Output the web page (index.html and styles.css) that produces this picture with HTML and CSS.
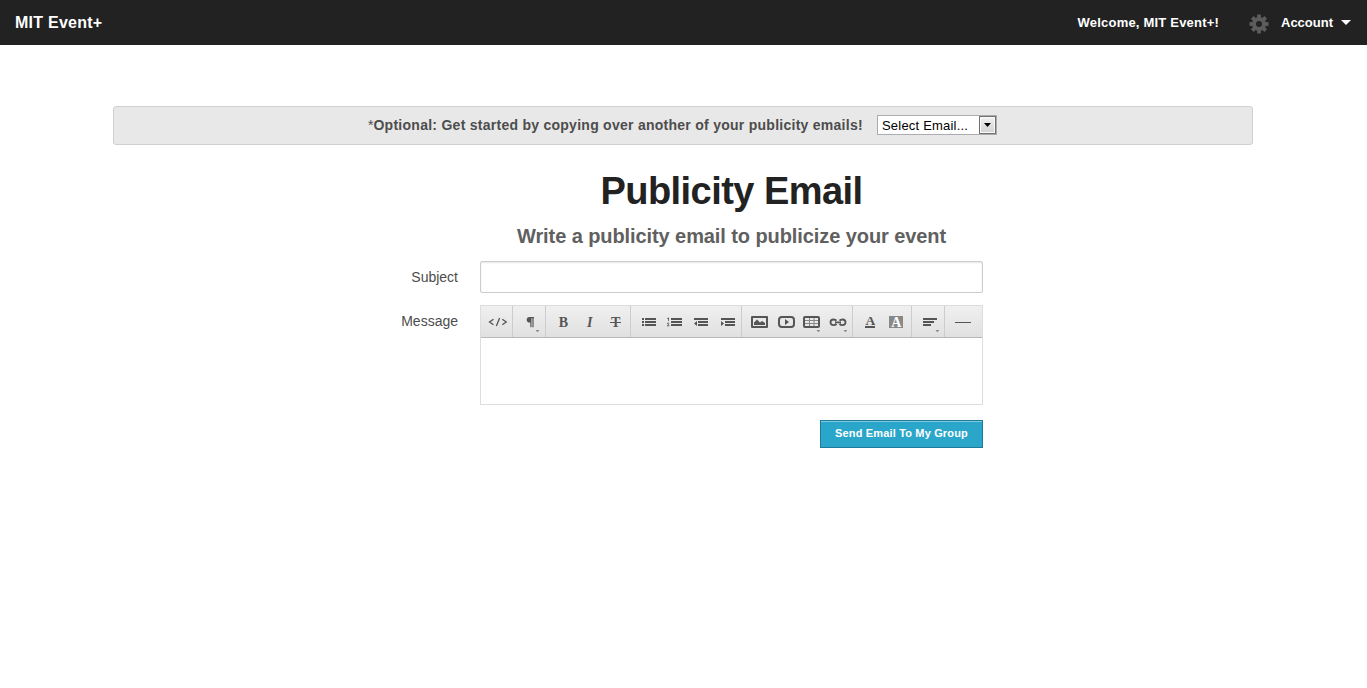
FILE: index.html
```html
<!DOCTYPE html>
<html lang="en">
<head>
<meta charset="utf-8">
<title>MIT Event+</title>
<link rel="stylesheet" href="styles.css">
</head>
<body>
<header class="topbar">
  <span class="brand">MIT Event+</span>
  <nav class="nav">
    <span class="welcome">Welcome, MIT Event+!</span>
    <svg class="gear" viewBox="-10 -10 20 20"><g fill="#5c5c5c"><rect x="-1.9" y="-9.5" width="3.8" height="19"/><rect x="-1.9" y="-9.5" width="3.8" height="19" transform="rotate(45)"/><rect x="-1.9" y="-9.5" width="3.8" height="19" transform="rotate(90)"/><rect x="-1.9" y="-9.5" width="3.8" height="19" transform="rotate(135)"/><circle r="7"/></g><circle r="3" fill="#222"/></svg>
    <span class="account">Account</span>
    <span class="caret"></span>
  </nav>
</header>
<main class="page">
  <section class="panel">
    <span class="hint"><span class="star">*</span>Optional: Get started by copying over another of your publicity emails!</span>
    <div class="select"><span class="select-text">Select Email...</span><span class="select-button"><svg width="7" height="4" viewBox="0 0 7 4"><path d="M0 0h7L3.5 4z"/></svg></span></div>
  </section>
  <form class="form">
    <h1 class="title"><span>Publicity Email</span></h1>
    <h2 class="subtitle"><span>Write a publicity email to publicize your event</span></h2>
    <div class="row subject-row">
      <label class="label" for="subject"><span>Subject</span></label>
      <input class="subject" id="subject" type="text">
    </div>
    <div class="row">
      <div class="label message"><span>Message</span></div>
      <div class="editor">
        <div class="toolbar">
          <svg class="group w32" viewBox="481 306 31 31"><g class="line"><path d="M493.5 319.2l-4 2.8 4 2.8M502.3 319.2l4 2.8-4 2.8M499.6 318l-3.2 8"/></g></svg>
          <svg class="group w33" viewBox="513 306 32 31"><path d="M534 317h-4.5a2.7 2.7 0 0 0 0 5.6h.8v4.7h1.2v-9.1h.9v9.1h1.2v-9.1h.4z"/><path class="drop" d="M535.6 330h3.8l-1.9 2.2z"/></svg>
          <svg class="group w85" viewBox="546 306 84 31"><text x="558.8" y="327" class="glyph">B</text><text x="586.9" y="327" class="glyph italic">I</text><text x="611" y="327" class="glyph">T</text><path class="gap" d="M610 321h11v3h-11z"/><path d="M610 322h11v1h-11zM614.7 321h2v3h-2z"/></svg>
          <svg class="group w111" viewBox="631 306 110 31"><path d="M642 318h2v2h-2zm3 0h11v2h-11zM642 321h2v2h-2zm3 0h11v2h-11zM642 324h2v2h-2zm3 0h11v2h-11zM671 318h11v2h-11zm0 3h11v2h-11zm0 3h11v2h-11zM694 318h14v2h-14zm4 3h10v2h-10zm0 3h10v2h-10zM697 321v5l-3-2.5zM721 318h14v2h-14zm4 3h10v2h-10zm0 3h10v2h-10zM721 321v5l3-2.5z"/><path class="thin" d="M667.2 318.5l1.3-.6v3M667 323.5q1.8-1 2 0l-1.7 2.3h2.2"/></svg>
          <svg class="group w111" viewBox="742 306 110 31"><path fill-rule="evenodd" d="M752 316h15q1 0 1 1v10q0 1-1 1h-15q-1 0-1-1v-10q0-1 1-1zm1 2v8h13v-8z"/><path d="M754 325v-2.5l3-3 3 3 2-1.5 3 2v2z"/><rect class="frame" x="779" y="317" width="15" height="10" rx="3"/><path d="M785 319v6l4-3z"/><rect class="frame" x="804" y="317" width="15" height="10" rx="1"/><path class="grid" d="M805 320.5h13M805 323.5h13M809.5 318v8M814 318v8"/><g class="link"><path d="M836.5 320.7q-1-1.2-3-1.2-3 0-3 2.8t3 2.8q2 0 3-1.2M839.5 320.7q1-1.2 3-1.2 3 0 3 2.8t-3 2.8q-2 0-3-1.2M835 322.3h6"/></g><path class="drop" d="M816.5 330h3.8l-1.9 2.2zM843.5 330h3.8l-1.9 2.2z"/></svg>
          <svg class="group w59" viewBox="853 306 58 31"><text x="865.4" y="325" class="glyph small">A</text><path d="M865 326h10v2h-10z"/><path class="swatch" d="M889 316h14v12h-14z"/><text x="891.2" y="327" class="glyph white">A</text></svg>
          <svg class="group w33" viewBox="912 306 32 31"><path d="M923 318h14v2h-14zM923 321h11v2h-11zM923 324h8v2h-8z"/><path class="drop" d="M935.5 330h3.8l-1.9 2.2z"/></svg>
          <svg class="group w37" viewBox="945 306 37 31"><path d="M955 322h16v1h-16z"/></svg>
        </div>
        <div class="editor-body"></div>
      </div>
    </div>
    <div class="actions"><button class="send" type="button"><span>Send Email To My Group</span></button></div>
  </form>
</main>
</body>
</html>
```
FILE: styles.css
```css
* { box-sizing: border-box; }
body { margin: 0; background: #fff; font-family: "Liberation Sans", Arial, sans-serif; color: #4d4d4d; }
span { white-space: nowrap; }
.topbar { display: flex; justify-content: space-between; height: 45px; padding: 0 16px 0 15px; background: #222; color: #fff; font-weight: bold; line-height: 45px; }
.brand { font-size: 16px; letter-spacing: .25px; }
.nav { display: flex; align-items: center; font-size: 13px; }
.welcome { margin-right: 30px; letter-spacing: .2px; }
.gear { width: 20px; height: 20px; margin: 3px 12px 0 0; }
.account { margin-right: 8px; }
.caret { width: 0; height: 0; border: 5px solid transparent; border-top-color: #fff; border-bottom: 0; }
.page { width: 1140px; margin: 61px 0 0 113px; }
.panel { display: flex; height: 39px; padding: 8px 0 0 254px; border: 1px solid #d0d0d0; border-radius: 3px; background: #e8e8e8; }
.hint { width: 509px; font-size: 14px; font-weight: bold; line-height: 20px; letter-spacing: .265px; }
.star { font-weight: normal; letter-spacing: 0; }
.select { display: flex; width: 120px; height: 20px; border: 1px solid #abadb3; background: #fff; }
.select-text { flex: 1; padding-left: 4px; font-size: 13px; line-height: 19px; letter-spacing: .2px; color: #000; }
.select-button { display: flex; align-items: center; justify-content: center; width: 17px; border: 1px solid #707070; background: linear-gradient(#f2f2f2, #d2d2d2); box-shadow: inset 0 0 0 1px #fafafa; }
.form { width: 583px; margin: 0 0 0 287px; }
.title, .subtitle { margin: 0 0 0 80px; text-align: center; }
.title { padding-top: 20px; font-size: 38px; line-height: 52px; letter-spacing: -.55px; color: #222; }
.subtitle { padding-top: 5px; height: 44px; font-size: 20px; line-height: 28px; letter-spacing: -.085px; color: #606060; }
.row { display: flex; }
.subject-row { margin-bottom: 12px; }
.label { width: 80px; padding-right: 22px; text-align: right; font-size: 14px; line-height: 32px; }
.subject { width: 503px; height: 32px; border: 1px solid #ccc; border-radius: 2px; box-shadow: inset 0 1px 2px rgba(0, 0, 0, .1); outline: 0; }
.editor { width: 503px; height: 100px; border: 1px solid #ddd; }
.toolbar { display: flex; height: 32px; border-bottom: 1px solid #b8b8b8; background: linear-gradient(#f0f0f0, #e0e0e0); }
.group { height: 31px; border-right: 1px solid #ccc; fill: #555; }
.group:last-child { border-right: 0; }
.w32 { width: 32px; }
.w33 { width: 33px; }
.w37 { width: 37px; }
.w59 { width: 59px; }
.w85 { width: 85px; }
.w111 { width: 111px; }
.line, .thin, .frame, .grid, .link { fill: none; stroke: #555; }
.line { stroke-width: 1.3; }
.thin { stroke-width: .9; }
.frame { stroke-width: 2; }
.grid { stroke: #888; }
.link { stroke-width: 1.8; }
.drop { fill: #888; }
.gap { fill: #e8e8e8; }
.swatch { fill: #888; }
.glyph { font-family: "Liberation Serif", serif; font-size: 14px; font-weight: bold; }
.italic { font-style: italic; }
.small { font-size: 13.5px; }
.white { fill: #fff; }
.actions { display: flex; justify-content: flex-end; padding-top: 15px; }
.send { width: 163px; height: 28px; padding: 0 0 2px; border: 1px solid #1e7a99; background: #2ba6cb; box-shadow: inset 0 1px 0 #80cae0; color: #fff; font: bold 11px "Liberation Sans", Arial, sans-serif; letter-spacing: .16px; }
```
